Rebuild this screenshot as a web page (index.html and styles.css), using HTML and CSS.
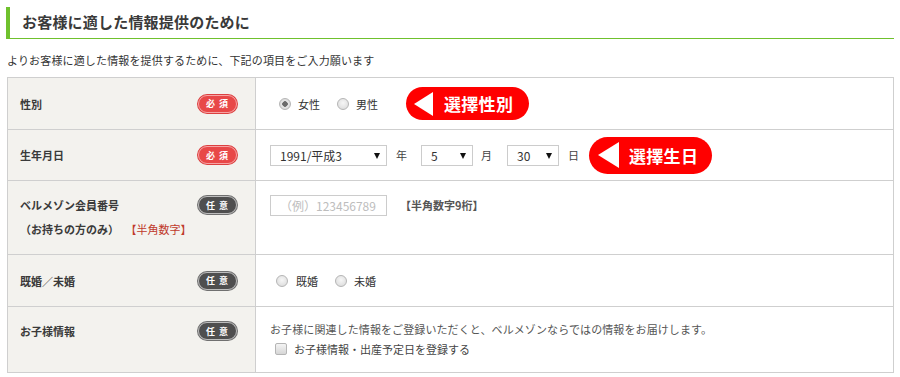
FILE: index.html
```html
<!DOCTYPE html>
<html lang="ja">
<head>
<meta charset="utf-8">
<title>お客様に適した情報提供のために</title>
<link rel="stylesheet" href="styles.css">
</head>
<body>
<div class="page">
  <h2 class="heading">お客様に適した情報提供のために</h2>
  <p class="lead">よりお客様に適した情報を提供するために、下記の項目をご入力願います</p>

  <div class="form-table">
    <div class="th row-1">
      <span class="label">性別</span>
      <span class="badge badge-req">必 須</span>
    </div>
    <div class="td row-1">
      <label class="choice"><input type="radio" name="sex" checked><span>女性</span></label>
      <label class="choice"><input type="radio" name="sex"><span>男性</span></label>
      <span class="pill pill-sex"><span class="pill-arrow"></span><span class="pill-text">選擇性別</span></span>
    </div>

    <div class="th row-2">
      <span class="label">生年月日</span>
      <span class="badge badge-req">必 須</span>
    </div>
    <div class="td row-2">
      <span class="select select-year"><select><option>1991/平成3</option></select></span>
      <span class="unit unit-year">年</span>
      <span class="select select-small"><select><option>5</option></select></span>
      <span class="unit unit-month">月</span>
      <span class="select select-small"><select><option>30</option></select></span>
      <span class="unit unit-day">日</span>
      <span class="pill pill-birth"><span class="pill-arrow"></span><span class="pill-text">選擇生日</span></span>
    </div>

    <div class="th row-3 top">
      <span class="label label-multi">ベルメゾン会員番号<br>（お持ちの方のみ） <span class="hint-red">【半角数字】</span></span>
      <span class="badge badge-opt">任 意</span>
    </div>
    <div class="td row-3 top">
      <div class="line">
        <input class="text-input" type="text" placeholder="（例）123456789">
        <span class="note">【半角数字9桁】</span>
      </div>
    </div>

    <div class="th row-4">
      <span class="label">既婚／未婚</span>
      <span class="badge badge-opt">任 意</span>
    </div>
    <div class="td row-4">
      <label class="choice choice-tight"><input type="radio" name="mar"><span>既婚</span></label>
      <label class="choice"><input type="radio" name="mar"><span>未婚</span></label>
    </div>

    <div class="th row-5 top last">
      <span class="label">お子様情報</span>
      <span class="badge badge-opt">任 意</span>
    </div>
    <div class="td row-5 top last">
      <div class="stack">
        <p class="desc">お子様に関連した情報をご登録いただくと、ベルメゾンならではの情報をお届けします。</p>
        <label class="check"><input type="checkbox"><span>お子様情報・出産予定日を登録する</span></label>
      </div>
    </div>
  </div>
</div>
</body>
</html>
```

FILE: styles.css
```css
* { box-sizing: border-box; }

html, body {
  margin: 0;
  padding: 0;
  background: #fff;
}

body {
  font-family: "Noto Sans CJK JP", "Noto Sans", "Liberation Sans", sans-serif;
  color: #333;
  font-size: 11px;
}

.page {
  width: 894px;
  padding: 7px 0 0 6px;
}

.heading {
  margin: 0;
  height: 32px;
  border-left: 4px solid #6fc12d;
  border-bottom: 1px solid #6fc12d;
  padding-left: 12px;
  font-size: 15px;
  font-weight: 700;
  line-height: 30px;
  color: #3a3a3a;
  letter-spacing: 0.2px;
}

.lead {
  margin: 12px 0 0 1px;
  font-size: 11px;
  line-height: 18px;
  letter-spacing: 0.15px;
  color: #333;
}

.form-table {
  margin: 8px 0 0 1px;
  display: grid;
  grid-template-columns: 248px 1fr;
  grid-template-rows: 52px 51px 74px 52px 66px;
  border: 1px solid #cfcfcf;
  border-bottom: 0;
}

.th, .td {
  border-bottom: 1px solid #cfcfcf;
  display: flex;
  align-items: center;
}

.th {
  background: #f3f2ee;
  border-right: 1px solid #cfcfcf;
  justify-content: space-between;
  padding: 0 18px 0 12px;
}

.td {
  padding: 0 14px;
}

.top { align-items: flex-start; padding-top: 12px; }

.label {
  font-weight: 700;
  color: #3a3a3a;
  font-size: 11px;
  line-height: 24px;
}

.hint-red {
  color: #c0392b;
  font-weight: 400;
  margin-left: 4px;
}

.badge {
  display: inline-flex;
  align-items: center;
  justify-content: center;
  width: 39px;
  height: 18px;
  border-radius: 9px;
  color: #fff;
  font-size: 9px;
  font-weight: 700;
  letter-spacing: 1px;
  flex: none;
}

.top .badge { margin-top: 3px; }

.badge-req {
  background: #e84848;
  border: 1px solid #f7a3a3;
  box-shadow: 0 0 0 1px #dc4040;
}

.badge-opt {
  background: #4f4f4f;
  border: 1px solid #bdbdbd;
  box-shadow: 0 0 0 1px #707070;
}

/* radios */
.choice {
  display: inline-flex;
  align-items: center;
  margin-left: 9px;
  margin-right: 15px;
  font-size: 11px;
  color: #333;
}

.choice input {
  appearance: none;
  -webkit-appearance: none;
  width: 12px;
  height: 12px;
  margin: 0 7px 0 0;
  border-radius: 50%;
  border: 1px solid #b5b5b5;
  background: radial-gradient(circle at 50% 40%, #f6f6f6 0%, #d8d8d8 100%);
}

.choice input:checked {
  background: radial-gradient(circle, #6b6b6b 0 2.5px, #e6e6e6 3px, #d0d0d0 100%);
}

.choice + .choice { margin-left: 2px; }

.choice-tight { margin-left: 6px; }
.choice-tight input { margin-right: 8px; }

/* pills */
.pill {
  display: inline-flex;
  align-items: center;
  background: #f00;
  color: #fff;
  border-radius: 17px;
  height: 33px;
  width: 123px;
  padding-left: 8px;
  margin-left: 13px;
}

.pill-birth {
  height: 37px;
  border-radius: 19px;
  margin-left: 10px;
}

.pill-arrow {
  width: 0;
  height: 0;
  border-top: 12px solid transparent;
  border-bottom: 12px solid transparent;
  border-right: 19px solid #fff;
  margin-right: 11px;
}

.pill-birth .pill-arrow {
  border-top-width: 13px;
  border-bottom-width: 13px;
  border-right-width: 21px;
  margin-left: 1px;
  margin-right: 10px;
}

.pill-text {
  font-size: 17px;
  font-weight: 700;
  letter-spacing: 0.3px;
  line-height: 1;
}

/* selects */
.select {
  position: relative;
  display: inline-block;
  height: 21px;
}

.select select {
  appearance: none;
  -webkit-appearance: none;
  height: 21px;
  border: 1px solid #cccccc;
  background: #fff;
  border-radius: 0;
  font-family: inherit;
  font-size: 12px;
  color: #333;
  padding: 0 0 0 9px;
  line-height: 19px;
}

.select-year select { width: 117px; }
.select-small select { width: 52px; }

.select::after {
  content: "";
  position: absolute;
  right: 7px;
  top: 8px;
  border-left: 3.5px solid transparent;
  border-right: 3.5px solid transparent;
  border-top: 6px solid #111;
}

.unit {
  font-size: 11px;
  color: #444;
  margin: 0 14px 0 9px;
}

.unit-month { margin-right: 15px; margin-left: 8px; }
.unit-day { margin-right: 0; }

/* text input */
.line {
  display: flex;
  align-items: center;
  height: 24px;
}

.text-input {
  width: 117px;
  height: 21px;
  border: 1px solid #cccccc;
  padding: 0 9px;
  font-family: inherit;
  font-size: 12px;
  color: #333;
  margin: 0;
}

.text-input::placeholder { color: #bdbdbd; }

.note {
  margin-left: 13px;
  font-weight: 700;
  color: #555;
  font-size: 11px;
}

/* children */
.stack {
  display: flex;
  flex-direction: column;
}

.desc {
  margin: 0;
  line-height: 20px;
  font-size: 11px;
  color: #555;
  letter-spacing: 0.1px;
}

.check {
  display: inline-flex;
  align-items: center;
  line-height: 20px;
  font-size: 11px;
  color: #444;
}

.check input {
  appearance: none;
  -webkit-appearance: none;
  width: 12px;
  height: 12px;
  margin: 0 7px 0 5px;
  border: 1px solid #b5b5b5;
  border-radius: 2px;
  background: linear-gradient(#f4f4f4, #d6d6d6);
}
```
